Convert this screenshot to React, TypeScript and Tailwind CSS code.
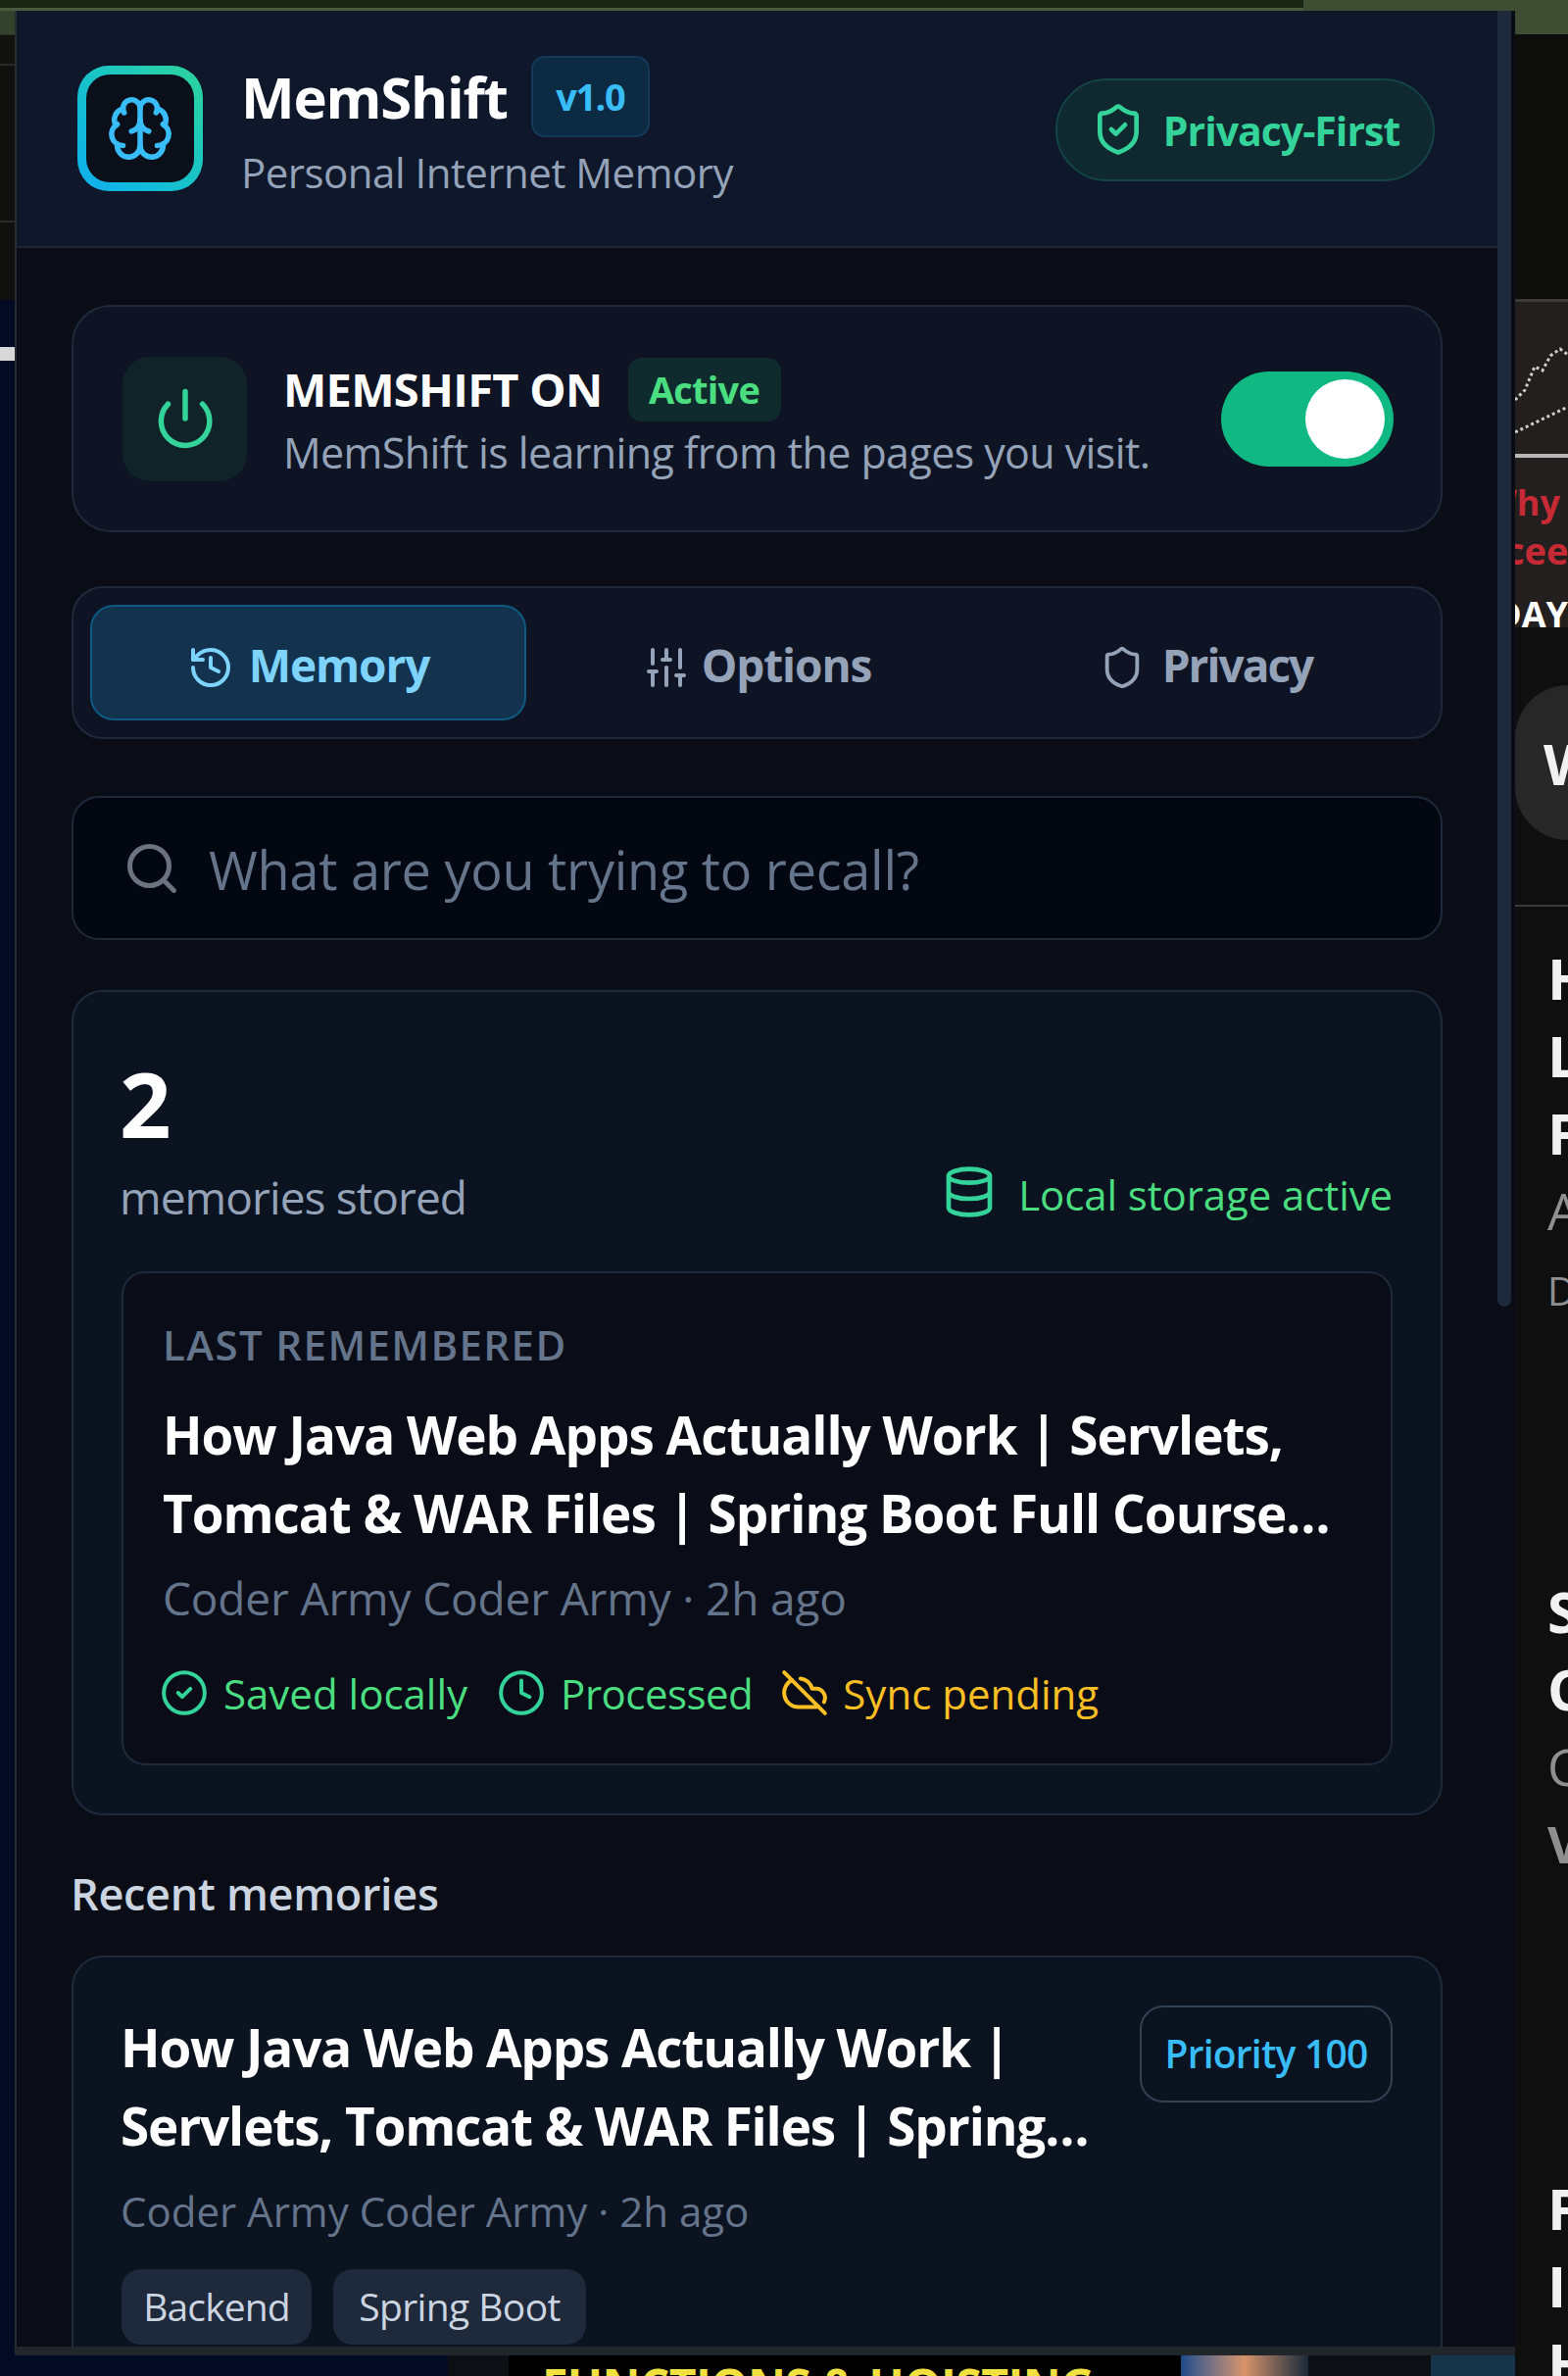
import { Brain, CircleCheck, Clock, CloudOff, Database, History, Power, Search, Shield, ShieldCheck, SlidersVertical } from 'lucide-react'

function LeftStrip() {
    return (
        <div className="w-[15px] shrink-0 flex flex-col overflow-hidden">
            <div className="h-[24px] bg-[#33422c]" />
            <div className="h-[30px] bg-[#12130f] border-t border-[#2a2d24]" />
            <div className="h-[160px] bg-[#10110e] border-t-2 border-[#2a2a26]" />
            <div className="h-[81px] bg-[#10110e] border-t-2 border-[#2a2a26]" />
            <div className="h-[48px] bg-[#020a24]" />
            <div className="h-[14px] bg-[#d8d8d8]" />
            <div className="flex-1 bg-[#020a24]" />
        </div>
    )
}

function Logo() {
    return (
        <div className="w-[128px] h-[128px] rounded-[32px] p-[9px] bg-gradient-to-tr from-[#12aef0] to-[#2fd49a] shrink-0">
            <div className="w-full h-full rounded-[24px] bg-[#0b0f1a] flex items-center justify-center">
                <Brain className="w-[70px] h-[70px] text-[#38bdf8]" strokeWidth={1.9} />
            </div>
        </div>
    )
}

function Header() {
    return (
        <div className="h-[242px] shrink-0 bg-[#0f172a] border-b-2 border-[#1c2534] flex items-center justify-between pl-[62px] pr-[64px]">
            <div className="flex items-center gap-[39px]">
                <Logo />
                <div className="flex flex-col -mt-[2px]">
                    <div className="flex items-center gap-[24px] h-[83px]">
                        <span className="text-[58px] leading-[70px] font-bold text-white tracking-[-1.2px]">MemShift</span>
                        <span className="w-[121px] h-[83px] flex items-center justify-center rounded-[14px] bg-[#0c2a42] border-2 border-[#123a58] text-[38px] font-bold text-[#38bdf8] tracking-[-1.5px]">
                            v1.0
                        </span>
                    </div>
                    <span className="mt-[9px] text-[42px] leading-[54px] text-[#94a3b8] tracking-[-0.5px]">Personal Internet Memory</span>
                </div>
            </div>
            <div className="w-[387px] h-[105px] mt-[2px] rounded-full bg-[#10282f] border-2 border-[#134446] flex items-center justify-center gap-[18px]">
                <ShieldCheck className="w-[56px] h-[56px] text-[#34d399]" strokeWidth={2} />
                <span className="pt-[4px] text-[41px] font-bold text-[#34d399] tracking-[-1px]">Privacy-First</span>
            </div>
        </div>
    )
}

function StatusCard() {
    return (
        <div className="h-[232px] rounded-[40px] bg-[#0e1424] border-2 border-[#1e293b] flex items-center justify-between pl-[50px] pr-[48px]">
            <div className="flex items-center gap-[37px]">
                <div className="w-[127px] h-[127px] rounded-[28px] bg-[#0f2328] flex items-center justify-center">
                    <Power className="w-[66px] h-[66px] text-[#34d399]" strokeWidth={2} />
                </div>
                <div className="flex flex-col">
                    <div className="flex items-center gap-[26px] h-[65px]">
                        <span className="text-[47px] font-bold text-white tracking-[-0.7px]">MEMSHIFT ON</span>
                        <span className="w-[156px] h-[65px] rounded-[14px] bg-[#0f2b2e] flex items-center justify-center text-[38px] font-bold text-[#4ade80] tracking-[-0.8px]">
                            Active
                        </span>
                    </div>
                    <span className="text-[43px] leading-[56px] text-[#94a3b8] tracking-[-0.6px] mt-[4px]">
                        MemShift is learning from the pages you visit.
                    </span>
                </div>
            </div>
            <div className="w-[176px] h-[97px] rounded-full bg-[#10b981] flex items-center justify-end pr-[9px]">
                <div className="w-[81px] h-[81px] rounded-full bg-white" />
            </div>
        </div>
    )
}

function Tabs() {
    return (
        <div className="h-[156px] rounded-[32px] bg-[#0f1424] border-2 border-[#1e293b] mt-[55px] grid grid-cols-3 gap-[13px] p-[17px]">
            <div className="rounded-[24px] bg-[#12324e] border-2 border-[#0e5a80] flex items-center justify-center gap-[15px] text-[#7dd3fc]">
                <History className="w-[48px] h-[48px] mt-[10px]" strokeWidth={2} />
                <span className="pt-[5px] text-[46px] font-bold tracking-[-1.1px]">Memory</span>
            </div>
            <div className="flex items-center justify-center gap-[12px] text-[#94a3b8]">
                <SlidersVertical className="w-[48px] h-[48px] mt-[10px]" strokeWidth={2} />
                <span className="pt-[5px] text-[46px] font-bold tracking-[-1.1px]">Options</span>
            </div>
            <div className="flex items-center justify-center gap-[18px] text-[#94a3b8]">
                <Shield className="w-[46px] h-[46px] mt-[10px]" strokeWidth={2} />
                <span className="pt-[5px] text-[46px] font-bold tracking-[-2px]">Privacy</span>
            </div>
        </div>
    )
}

function SearchBox() {
    return (
        <div className="h-[147px] rounded-[28px] bg-[#030712] border-2 border-[#1e293b] mt-[58px] flex items-center gap-[28px] pl-[50px]">
            <Search className="w-[60px] h-[60px] text-[#6b7280]" strokeWidth={2} />
            <span className="pt-[4px] text-[54px] text-[#64748b] tracking-[-0.25px]">What are you trying to recall?</span>
        </div>
    )
}

function StatsCard() {
    return (
        <div className="rounded-[32px] bg-[#0c1320] border-2 border-[#1e293b] mt-[51px] px-[49px] pt-[64px] pb-[49px]">
            <div className="flex items-end justify-between">
                <div className="flex flex-col -ml-[2px]">
                    <span className="text-[92px] leading-[100px] font-bold text-white">2</span>
                    <span className="text-[46px] leading-[56px] text-[#94a3b8] tracking-[-0.9px] mt-[17px]">memories stored</span>
                </div>
                <div className="flex items-center gap-[22px] h-[56px] mb-[3px] text-[#34d399]">
                    <Database className="w-[56px] h-[56px] mb-[4px]" strokeWidth={2} />
                    <span className="text-[42px] tracking-[-0.1px] text-[#4ade80]">Local storage active</span>
                </div>
            </div>
            <div className="rounded-[24px] bg-[#0a0d18] border-2 border-[#1e293b] mt-[48px] pl-[40px] pt-[47px] pb-[44px]">
                <div className="text-[42px] leading-[52px] font-semibold text-[#64748b] tracking-[1.4px]">LAST REMEMBERED</div>
                <div className="mt-[26px] text-[53px] leading-[80px] font-bold text-white tracking-[-1px] whitespace-nowrap">
                    <div>How Java Web Apps Actually Work | Servlets,</div>
                    <div>Tomcat & WAR Files | Spring Boot Full Course…</div>
                </div>
                <div className="mt-[18px] text-[46px] leading-[56px] text-[#64748b] tracking-[-0.15px]">Coder Army Coder Army · 2h ago</div>
                <div className="mt-[41px] h-[56px] flex items-center text-[42px]">
                    <CircleCheck className="-ml-[3px] w-[50px] h-[50px] text-[#34d399]" strokeWidth={1.9} />
                    <span className="ml-[15px] text-[#4ade80]">Saved locally</span>
                    <Clock className="ml-[30px] w-[50px] h-[50px] text-[#34d399]" strokeWidth={1.9} />
                    <span className="ml-[15px] text-[#4ade80] tracking-[-0.5px]">Processed</span>
                    <CloudOff className="ml-[28px] w-[50px] h-[50px] text-[#fbbf24]" strokeWidth={1.9} />
                    <span className="ml-[14px] text-[#fbbf24]">Sync pending</span>
                </div>
            </div>
        </div>
    )
}

function RecentCard() {
    return (
        <div className="rounded-t-[32px] bg-[#0c1320] border-2 border-b-0 border-[#1e293b] mt-[35px] pl-[48px] pr-[50px] pt-[52px] pb-[2px]">
            <div className="flex justify-between items-start">
                <div className="text-[53px] leading-[80px] font-bold text-white tracking-[-1.15px] whitespace-nowrap">
                    <div>How Java Web Apps Actually Work |</div>
                    <div>Servlets, Tomcat & WAR Files | Spring…</div>
                </div>
                <div className="w-[258px] h-[99px] rounded-[24px] border-2 border-[#334155] flex items-center justify-center text-[39px] font-semibold text-[#38bdf8] tracking-[-0.8px] -mt-[3px] -mr-[1px]">
                    Priority 100
                </div>
            </div>
            <div className="mt-[19px] text-[42px] leading-[56px] text-[#64748b]">Coder Army Coder Army · 2h ago</div>
            <div className="mt-[31px] flex gap-[22px] ml-[1px]">
                <span className="w-[194px] h-[77px] rounded-[20px] bg-[#1e293b] flex items-center justify-center text-[39px] text-[#cbd5e1] tracking-[-0.9px]">Backend</span>
                <span className="w-[258px] h-[77px] rounded-[20px] bg-[#1e293b] flex items-center justify-center text-[39px] text-[#cbd5e1] tracking-[-0.6px]">Spring Boot</span>
            </div>
        </div>
    )
}

function Panel() {
    return (
        <div className="w-[1531px] shrink-0 flex border-l-2 border-[#262c30] border-b-[9px] border-b-[#20262a] bg-[#0a0d15] overflow-hidden">
            <div className="w-[1511px] shrink-0 flex flex-col">
                <Header />
                <div className="px-[56px] pt-[58px] flex flex-col">
                    <StatusCard />
                    <Tabs />
                    <SearchBox />
                    <StatsCard />
                    <div className="mt-[52px] -ml-[1px] text-[45px] leading-[56px] font-semibold text-[#cbd5e1] tracking-[-0.3px]">Recent memories</div>
                    <RecentCard />
                </div>
            </div>
            <div className="flex-1 pr-[4px]">
                <div className="h-[1322px] bg-[#1e293b] rounded-b-[8px]" />
            </div>
        </div>
    )
}

function RightStrip() {
    return (
        <div className="w-[54px] h-[2424px] shrink-0 flex flex-col overflow-hidden bg-[#0f0f0f] font-bold text-[58px] leading-[79px] text-[#f1f1f1]">
            <div className="h-[35px] shrink-0 bg-[#3f4d33]" />
            <div className="h-[270px] shrink-0 bg-[#0d0d0c]" />
            <div className="h-[335px] shrink-0 bg-[#231f1f] flex flex-col overflow-hidden">
                <div className="h-[3px] shrink-0 bg-[#3a3a3a]" />
                <svg className="w-[54px] h-[155px] shrink-0" viewBox="0 0 54 155" fill="none" stroke="#cfcfcf" strokeWidth="3" strokeDasharray="3 3">
                    <path d="M0 100 L10 90 L20 66 L28 70 L36 55 L46 48 L54 54" />
                    <path d="M0 133 L54 107" />
                </svg>
                <div className="h-[4px] bg-[#b9b9b9] shrink-0" />
                <div className="-ml-[33px] shrink-0 whitespace-nowrap text-[#c62a35] text-[36px] leading-[50px] mt-[21px] font-bold">Why</div>
                <div className="-ml-[10px] shrink-0 whitespace-nowrap text-[#c62a35] text-[38px] leading-[46px] font-bold">cee</div>
                <div className="-ml-[20px] shrink-0 whitespace-nowrap text-white text-[36px] leading-[30px] mt-[28px] font-bold">DAY</div>
            </div>
            <div className="h-[158px] shrink-0 mt-[59px] rounded-l-full bg-[#272727] pl-[29px] flex items-center">W</div>
            <div className="h-[2px] shrink-0 mt-[66px] bg-[#3a3a3a]" />
            <div className="pl-[33px] mt-[33px] flex flex-col">
                <span>H</span>
                <span>L</span>
                <span>F</span>
                <span className="text-[#8f8f8f] font-normal text-[52px]">A</span>
                <span className="text-[#8f8f8f] font-normal text-[40px] pt-[3px]">D</span>
            </div>
            <div className="pl-[33px] mt-[248px] flex flex-col">
                <span>S</span>
                <span>C</span>
                <span className="text-[#8f8f8f] font-normal text-[52px]">C</span>
                <span className="text-[#8f8f8f] text-[52px]">V</span>
            </div>
            <div className="pl-[33px] mt-[293px] flex flex-col">
                <span>F</span>
                <span>I</span>
                <span>H</span>
            </div>
        </div>
    )
}

function BottomStrip() {
    return (
        <div className="h-[21px] flex overflow-hidden bg-black">
            <div className="w-[457px] bg-[#020a24]" />
            <div className="w-[62px] bg-[#0c0f14]" />
            <div className="w-[686px] pl-[34px] pt-[6px] whitespace-nowrap text-[#f0e040] text-[48px] leading-[50px] font-bold tracking-[-0.6px]">FUNCTIONS & HOISTING</div>
            <div className="w-[130px] bg-gradient-to-r from-[#1a4a8a] via-[#d89468] to-[#1a2a3a]" />
            <div className="w-[125px] bg-[#0c0f14]" />
            <div className="w-[86px] bg-[#16344a]" />
        </div>
    )
}

export default function App() {
    return (
        <div className="w-[1600px] h-[2424px] overflow-hidden flex bg-black font-['Open_Sans',sans-serif]">
            <div className="w-[1546px] shrink-0 flex flex-col">
                <div className="h-[11px] shrink-0 flex">
                    <div className="w-[1330px] bg-[#1a2514] border-b-[3px] border-[#4a5a3c]" />
                    <div className="flex-1 bg-[#3f4d33]" />
                </div>
                <div className="h-[2392px] shrink-0 flex">
                    <LeftStrip />
                    <Panel />
                </div>
                <BottomStrip />
            </div>
            <RightStrip />
        </div>
    )
}
